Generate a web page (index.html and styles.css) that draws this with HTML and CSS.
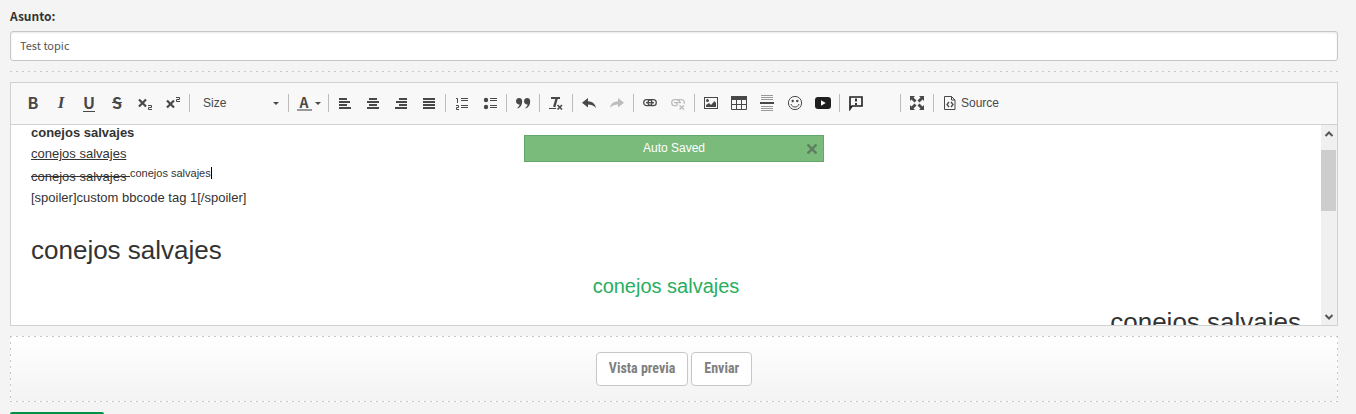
FILE: index.html
```html
<!DOCTYPE html>
<html lang="es">
<head>
<meta charset="utf-8">
<title>Test topic</title>
<link rel="stylesheet" href="styles.css">
</head>
<body>
<form class="post">
  <label class="subject-label" for="subject">Asunto:</label>
  <input class="subject" id="subject" type="text" value="Test topic">
  <div class="divider"></div>

  <div class="editor">
    <div class="toolbar" role="toolbar" aria-label="Editor">
      <button type="button" class="tool letter" aria-label="Bold">B</button>
      <button type="button" class="tool letter italic" aria-label="Italic">I</button>
      <button type="button" class="tool letter underline" aria-label="Underline">U</button>
      <button type="button" class="tool letter strike" aria-label="Strikethrough">S</button>
      <button type="button" class="tool" aria-label="Subscript"><svg viewBox="0 0 16 16"><path d="M2 4.500l7 7M9 4.500l-7 7" stroke-width="2.200"/><path d="M11 10.500h3.500v2h-3v2h3.500"/></svg></button>
      <button type="button" class="tool" aria-label="Superscript"><svg viewBox="0 0 16 16"><path d="M2 5.500l7 7M9 5.500l-7 7" stroke-width="2.200"/><path d="M11 2.500h3.500v2h-3v2h3.500"/></svg></button>
      <span class="sep"></span>
      <button type="button" class="combo"><span>Size</span><i class="caret"></i></button>
      <span class="sep"></span>
      <button type="button" class="tool color" aria-label="Text color"><span class="color-letter">A</span><i class="caret"></i></button>
      <span class="sep"></span>
      <button type="button" class="tool" aria-label="Align left"><svg viewBox="0 0 16 16"><path d="M2 4h8M2 7h11M2 10h8M2 13h12" stroke-width="2"/></svg></button>
      <button type="button" class="tool" aria-label="Center"><svg viewBox="0 0 16 16"><path d="M4 4h8M2 7h12M4 10h8M2 13h12" stroke-width="2"/></svg></button>
      <button type="button" class="tool" aria-label="Align right"><svg viewBox="0 0 16 16"><path d="M6 4h8M3 7h11M6 10h8M2 13h12" stroke-width="2"/></svg></button>
      <button type="button" class="tool" aria-label="Justify"><svg viewBox="0 0 16 16"><path d="M2 4h12M2 7h12M2 10h12M2 13h12" stroke-width="2"/></svg></button>
      <span class="sep"></span>
      <button type="button" class="tool" aria-label="Numbered list"><svg viewBox="0 0 16 16"><path d="M7 3.500h7M7 5.500h7M7 10.500h7M7 12.500h7M2 3.500h1.500V8M2 10.500h2.500v2h-2v2h2.500"/></svg></button>
      <button type="button" class="tool" aria-label="Bulleted list"><svg viewBox="0 0 16 16"><path d="M8 3.500h7M8 5.500h7M8 10.500h7M8 12.500h7"/><circle class="fill" cx="4" cy="5" r="2.200"/><circle class="fill" cx="4" cy="12" r="2.200"/></svg></button>
      <span class="sep"></span>
      <button type="button" class="tool" aria-label="Block quote"><svg viewBox="0 0 16 16"><path class="fill" d="M4 3c2 0 3.200 1.200 3.200 3.400 0 3.500-2 6-4.400 7.100l-.4-.8c1.300-.9 2-2 2.200-3.300C2.500 9.500 1 8.300 1 6.200 1 4.300 2.200 3 4 3zM12 3c2 0 3.200 1.200 3.200 3.400 0 3.500-2 6-4.400 7.100l-.4-.8c1.300-.9 2-2 2.200-3.300C10.500 9.500 9 8.300 9 6.200 9 4.300 10.200 3 12 3z"/></svg></button>
      <span class="sep"></span>
      <button type="button" class="tool" aria-label="Remove format"><svg viewBox="0 0 16 16"><path d="M3 3h9" stroke-width="2"/><path d="M8.800 3L6.200 12" stroke-width="2.400"/><path d="M1 13.500h7"/><path d="M9.500 10l4.500 4.500M14 10l-4.500 4.500" stroke-width="1.600"/></svg></button>
      <span class="sep"></span>
      <button type="button" class="tool" aria-label="Undo"><svg viewBox="0 0 16 16"><path class="fill" d="M7 3L1 7.800l6 4.600V9.500c3 0 5.500.5 8 3.500-.8-4.500-4-6.500-8-6.700z"/></svg></button>
      <button type="button" class="tool" disabled aria-label="Redo"><svg viewBox="0 0 16 16"><path class="fill" d="M9 3l6 4.800-6 4.600V9.500c-3 0-5.500.5-8 3.500.8-4.500 4-6.500 8-6.700z"/></svg></button>
      <span class="sep"></span>
      <button type="button" class="tool" aria-label="Link"><svg viewBox="0 0 16 16"><rect x="1.700" y="4.700" width="8.300" height="6" rx="3" stroke-width="1.200"/><rect x="6" y="4.700" width="8.300" height="6" rx="3" stroke-width="1.200"/><path d="M4 7.700h8" stroke-width="1.300"/></svg></button>
      <button type="button" class="tool" disabled aria-label="Unlink"><svg viewBox="0 0 16 16"><path d="M7 10.700H4.700a3 3 0 0 1 0-6H7a3 3 0 0 1 2.800 3M8 10a3 3 0 0 1-1.500-2.500M7 5.500c.5-.5 1-.8 2-.8h2.500a3 3 0 0 1 2.700 4M4 7.700h7" stroke-width="1.300"/><path d="M9.500 10.500l4.500 4M14 10.500l-4.500 4" stroke-width="1.500"/></svg></button>
      <span class="sep"></span>
      <button type="button" class="tool" aria-label="Image"><svg viewBox="0 0 16 16"><rect x="1.500" y="2.500" width="13" height="11"/><circle class="fill" cx="4.500" cy="5.500" r="1.500"/><path class="fill" d="M3 12V10l3-2 2 2 3.500-4L13 8v4z"/></svg></button>
      <button type="button" class="tool" aria-label="Table"><svg viewBox="0 0 16 16"><path class="fill" d="M0 1h16v4H0z"/><path d="M.5 5v9.500h15V5M5.500 5v9.500M10.500 5v9.500M.5 9.500h15"/></svg></button>
      <button type="button" class="tool" aria-label="Horizontal line"><svg viewBox="0 0 16 16"><path class="soft" d="M2 .5h12M2 2.500h12M2 4.500h12M2 11.500h12M2 13.500h12M2 15.500h12"/><path d="M1 8h14" stroke-width="2"/></svg></button>
      <button type="button" class="tool" aria-label="Smiley"><svg viewBox="0 0 16 16"><circle cx="8" cy="8" r="6.600"/><circle class="fill" cx="5.700" cy="6" r="1.200"/><circle class="fill" cx="10.300" cy="6" r="1.200"/><path d="M4 9c1 4 7 4 8 0"/></svg></button>
      <button type="button" class="tool dark" aria-label="YouTube"><svg viewBox="0 0 16 16"><rect class="fill" x="0" y="2" width="16" height="12" rx="3"/><path d="M6 5.300v5.400L10.700 8z" fill="#fff" stroke="none"/></svg></button>
      <span class="sep"></span>
      <button type="button" class="tool dark" aria-label="Spoiler"><svg viewBox="0 0 16 16"><path d="M2 14V2h12v9H4z" stroke-width="1.600"/><path d="M8 3.500v3M8 8v2" stroke-width="1.800"/></svg></button>
      <button type="button" class="tool" aria-label="Custom tag"></button>
      <span class="sep"></span>
      <button type="button" class="tool" aria-label="Maximize"><svg viewBox="0 0 16 16"><path class="fill" d="M1 1h5L4.500 2.500l3 3-2 2-3-3L1 6zM15 1v5l-1.500-1.500-3 3-2-2 3-3L10 1zM1 15v-5l1.500 1.500 3-3 2 2-3 3L6 15zM15 15h-5l1.500-1.500-3-3 2-2 3 3L15 10z"/></svg></button>
      <span class="sep"></span>
      <button type="button" class="tool source"><svg viewBox="0 0 16 16"><path d="M2.500 1.500h7l3.500 3.500v9.500h-10.500zM9.500 1.500V5H13"/><path d="M7 7L5 9.500 7 12M9 7l2 2.500-2 2.500" stroke-width="1.300"/></svg><span>Source</span></button>
    </div>

    <div class="stage">
      <div class="document" contenteditable="true" role="textbox" aria-label="Mensaje" spellcheck="false">
        <p><strong>conejos salvajes</strong></p>
        <p><u>conejos salvajes</u></p>
        <p class="mixed"><s>conejos salvajes </s><sup>conejos salvajes</sup></p>
        <p>[spoiler]custom bbcode tag 1[/spoiler]</p>
        <p class="large">conejos salvajes</p>
        <p class="green">conejos salvajes</p>
        <p class="right">conejos salvajes</p>
      </div>
      <div class="scrollbar" aria-hidden="true">
        <svg viewBox="0 0 16 25"><path d="M4.500 11L8 7.500l3.500 3.500" stroke-width="2"/></svg>
        <div class="thumb"></div>
        <svg viewBox="0 0 16 16"><path d="M4.500 6L8 9.500 11.500 6" stroke-width="2"/></svg>
      </div>
      <div class="notice" role="status">
        <span>Auto Saved</span>
        <button type="button" aria-label="Close"><svg viewBox="0 0 10 10"><path d="M.5.5l9 9M9.500.5l-9 9" stroke-width="2.500"/></svg></button>
      </div>
    </div>
  </div>

  <div class="actions">
    <button type="button">Vista previa</button>
    <button type="submit">Enviar</button>
  </div>
  <div class="next-button"></div>
</form>
</body>
</html>
```
FILE: styles.css
```css
* { box-sizing: border-box; }

body {
  margin: 0;
  background: #f4f4f4;
  color: #333;
  font: 13px/21px "Liberation Sans", Arial, sans-serif;
}

button {
  margin: 0;
  padding: 0;
  border: 0;
  background: none;
  color: inherit;
  font: inherit;
}

svg {
  display: block;
  fill: none;
  stroke: currentColor;
}

.fill { fill: currentColor; stroke: none; }
.soft { stroke: #999; }

.post { padding: 7px 18px 0 10px; }

.subject-label {
  display: block;
  height: 24px;
  font: bold 12px/18px "Noto Sans CJK SC", sans-serif;
}

.subject {
  display: block;
  width: 100%;
  height: 30px;
  padding: 0 10px 2px 9px;
  border: 1px solid #c7c7c7;
  border-radius: 3px;
  background: #fff;
  box-shadow: inset 0 1px 2px #e8e8e8;
  color: #555;
  font: 11px/16px "Noto Sans CJK SC", sans-serif;
}

.divider {
  height: 1px;
  margin: 10px 0;
  background: repeating-linear-gradient(90deg, #c7c7c7 0 2px, transparent 2px 6px);
}

.editor { border: 1px solid #d1d1d1; }

.toolbar {
  display: flex;
  align-items: center;
  height: 42px;
  padding: 0 8px 1px;
  border-bottom: 1px solid #d1d1d1;
  background: #f8f8f8;
  color: #484848;
}

.tool {
  display: flex;
  flex: none;
  align-items: center;
  justify-content: center;
  width: 28px;
  height: 28px;
}

.tool svg { flex: none; width: 16px; height: 16px; }
.tool:disabled { color: #bcbcbc; }
.dark { color: #1f1f1f; }
.letter { padding-bottom: 2px; font: bold 16px/16px "Noto Sans CJK SC", sans-serif; }
.italic { padding-bottom: 0; font: italic bold 17px/16px "Liberation Serif", serif; }
.underline { text-decoration: underline; text-underline-offset: 2px; text-decoration-thickness: 1px; }
.strike { text-decoration: line-through; }

.sep {
  flex: none;
  width: 1px;
  height: 18px;
  margin: 0 2px;
  background: #bcbcbc;
}

.caret {
  border: 3px solid transparent;
  border-top-color: #484848;
  border-bottom: 0;
}

.combo {
  display: flex;
  flex: none;
  align-items: center;
  justify-content: space-between;
  width: 94px;
  height: 28px;
  padding: 0 7px 0 11px;
  font-size: 12px;
}

.color { width: 35px; gap: 3px; }

.color-letter {
  width: 15px;
  border-bottom: 2px solid #999;
  font: bold 14px/14px "Noto Sans CJK SC", sans-serif;
}

.source {
  width: auto;
  padding: 0 6px;
  gap: 3px;
  font-size: 12px;
}

.stage {
  position: relative;
  display: flex;
  height: 200px;
  overflow: hidden;
  background: #fff;
}

.document {
  flex: 1;
  margin-top: -3px;
  padding: 0 20px;
  outline: 0;
}

.document p { margin: 0; }
.mixed { height: 23px; }
.document .mixed { line-height: 25px; }
.document sup {
  border-right: 1px solid #000;
  font-size: 11px;
  line-height: 12px;
  vertical-align: 4px;
}
.document .large { margin-top: 21px; font-size: 26px; line-height: 42px; }
.document .green { color: #27ae60; font-size: 20px; line-height: 30px; text-align: center; }
.document .right { font-size: 26px; line-height: 42px; text-align: right; }

.scrollbar {
  display: flex;
  flex-direction: column;
  width: 16px;
  background: #f0f0f0;
  color: #555;
}

.scrollbar svg { width: 16px; }
.scrollbar svg:last-child { margin-top: auto; }
.thumb { width: 15px; height: 61px; background: #cdcdcd; }

.notice {
  position: absolute;
  top: 10px;
  left: 50%;
  display: flex;
  align-items: center;
  width: 300px;
  height: 27px;
  margin-left: -150px;
  padding: 0 6px 0 16px;
  border: 1px solid #65a66a;
  background: #7aba7b;
  color: #fff;
  font-size: 12px;
}

.notice span { flex: 1; text-align: center; }
.notice svg { width: 10px; height: 10px; color: #5f7f62; }

.actions {
  display: flex;
  justify-content: center;
  gap: 3px;
  margin-top: 10px;
  padding: 16px 0;
  background:
    repeating-linear-gradient(90deg, #c7c7c7 0 2px, #fff 2px 6px) 0 0 / 100% 1px no-repeat,
    repeating-linear-gradient(90deg, #c7c7c7 0 2px, #fff 2px 6px) 0 100% / 100% 1px no-repeat,
    repeating-linear-gradient(#c7c7c7 0 2px, #fff 2px 6px) 0 0 / 1px 100% no-repeat,
    repeating-linear-gradient(#c7c7c7 0 2px, #fff 2px 6px) 100% 0 / 1px 100% no-repeat,
    linear-gradient(#fff, #f3f3f3);
}

.actions button {
  height: 34px;
  padding: 0 12px 2px;
  border: 1px solid #c7c7c7;
  border-radius: 4px;
  background: #fff;
  color: #808080;
  font: bold 14px/20px "Roboto Condensed", "Liberation Sans Narrow", sans-serif;
}

.next-button {
  width: 94px;
  height: 2px;
  margin-top: 10px;
  border-radius: 4px 4px 0 0;
  background: #009245;
}
```
